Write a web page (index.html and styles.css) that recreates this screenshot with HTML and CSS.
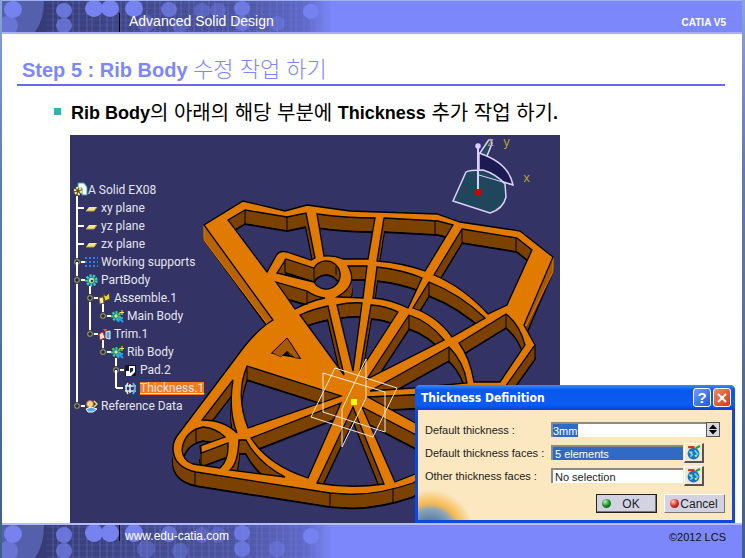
FILE: index.html
```
<!DOCTYPE html>
<html lang="ko">

<head>
    <meta charset="UTF-8">
    <meta name="viewport" content="width=device-width, initial-scale=1.0">
    <title>Advanced Solid Design - Step 5</title>
    <link rel="stylesheet" href="styles.css">
</head>

<body>
    <!-- Shared drawings -->
    <svg class="defs" width="0" height="0" aria-hidden="true">
        <defs>
            <linearGradient id="fade" x1="0" x2="1">
                <stop offset="0" stop-color="#32376d"/>
                <stop offset="0.7" stop-color="#4c549e"/>
                <stop offset="0.92" stop-color="#5f69c8"/>
                <stop offset="1" stop-color="#7b87fb"/>
            </linearGradient>
            <pattern id="threads" width="34" height="6" patternUnits="userSpaceOnUse">
                <path d="M3 0V6M9 0V6M17 0V6M22 0V6M30 0V6" stroke="#7b87e8" stroke-opacity="0.35"/>
                <path d="M0 2H34" stroke="#7b87e8" stroke-opacity="0.18"/>
            </pattern>
            <symbol id="dots" viewBox="0 0 330 33" preserveAspectRatio="none">
                <rect width="330" height="33" fill="url(#fade)"/>
                <path d="M0 0H42Q42 20 33 33H0Z" fill="#5560ad"/>
                <rect x="44" width="280" height="33" fill="url(#threads)"/>
                <g fill="#7682f0">
                    <circle cx="11" cy="9" r="9"/>
                    <circle cx="6" cy="26" r="10" opacity="0.6"/>
                    <circle cx="62" cy="10" r="8" opacity="0.8"/>
                    <circle cx="62" cy="26" r="8" opacity="0.7"/>
                    <circle cx="92" cy="8" r="9"/>
                    <circle cx="108" cy="8" r="9"/>
                    <circle cx="132" cy="8" r="9"/>
                    <circle cx="144" cy="24" r="9" opacity="0.4"/>
                    <circle cx="167" cy="9" r="8" opacity="0.7"/>
                    <circle cx="200" cy="10" r="8" opacity="0.4"/>
                    <circle cx="216" cy="10" r="8" opacity="0.4"/>
                    <circle cx="178" cy="26" r="8" opacity="0.4"/>
                    <circle cx="240" cy="8" r="8" opacity="0.8"/>
                    <circle cx="240" cy="24" r="8" opacity="0.7"/>
                    <circle cx="275" cy="24" r="8" opacity="0.4"/>
                    <circle cx="309" cy="11" r="8"/>
                </g>
            </symbol>
            <symbol id="knob" viewBox="0 0 12 12">
                <path d="M6 6H12" stroke="#fff" stroke-width="2"/>
                <circle cx="4" cy="6" r="3.5" fill="#8c8c8c" stroke="#333"/>
                <path d="M2 6H6M4 4V8" stroke="#111"/>
            </symbol>
            <symbol id="dash" viewBox="0 0 12 12">
                <path d="M4 6H11" stroke="#fff" stroke-width="2"/>
            </symbol>
            <symbol id="plane" viewBox="0 0 13 13">
                <path d="M4 5H12L9 9H1Z" fill="#f5e58a"/>
                <path d="M1 9H9L12 5" fill="none" stroke="#b8a03c"/>
            </symbol>
            <symbol id="grid" viewBox="0 0 13 13">
                <path d="M0 2H13M0 6H13M0 10H13" stroke="#2d7df0" stroke-width="2" stroke-dasharray="2 2"/>
            </symbol>
            <symbol id="gear" viewBox="0 0 13 13">
                <circle cx="6.5" cy="6.5" r="5" fill="#1b7fa0" stroke="#3fd0c0" stroke-width="2.5" stroke-dasharray="2 1.5"/>
                <circle cx="6.5" cy="6.5" r="2.7" fill="#d8e860"/>
                <circle cx="7" cy="7" r="1.3" fill="#154070"/>
            </symbol>
            <symbol id="body" viewBox="0 0 13 13">
                <circle cx="5" cy="6" r="3.7" fill="#1b7fa0" stroke="#40c890" stroke-width="2.5" stroke-dasharray="2 1.3"/>
                <circle cx="5" cy="6" r="1.7" fill="#d8e860"/>
                <path d="M7 7L12 12M7 12L9 8L12 8" stroke="#2d9df0" stroke-width="2"/>
                <path d="M11 0V5M8.500 2.500H13" stroke="#ffe860"/>
            </symbol>
            <symbol id="assemble" viewBox="0 0 13 13">
                <path d="M1 6L5 5L6 11L2 12Z" fill="#f6f0b0" stroke="#806a20"/>
                <path d="M5 2L8 4L11 1L12 7L7 9Z" fill="#e8cf40" stroke="#5a4b10"/>
            </symbol>
            <symbol id="trim" viewBox="0 0 13 13">
                <path d="M1 6L5 4L7 10L2 12Z" fill="#f6e0d0" stroke="#c03020"/>
                <path d="M5 1H9L8 5Z" fill="#e85040"/>
                <path d="M8 4L12 3V11L8 10Z" fill="#3fa0d8" stroke="#f0f0f0"/>
            </symbol>
            <symbol id="pad" viewBox="0 0 13 13">
                <path d="M1 1H12V12H1Z" fill="#15152c"/>
                <path d="M5 2H11V8L7 12H2V7H5Z" fill="#fff"/>
                <path d="M6 4H9V7L6 9Z" fill="#20204a"/>
            </symbol>
            <symbol id="thick" viewBox="0 0 13 13">
                <path d="M4 1Q0 6 4 12M6 2V11M1 4H12M1 9H12" fill="none" stroke="#d8f0f0" stroke-width="1.500"/>
                <path d="M9 1Q13 6 9 12" fill="none" stroke="#60b0c8" stroke-width="2"/>
            </symbol>
            <symbol id="refs" viewBox="0 0 13 13">
                <circle cx="5" cy="4" r="3.500" fill="#f4d890" stroke="#c06030"/>
                <path d="M1 9L6 7L12 9L8 12H3Z" fill="#50a8e0" stroke="#fff"/>
                <path d="M9 1L12 4L9 7" fill="none" stroke="#e8e060" stroke-width="1.500"/>
            </symbol>
            <symbol id="pick" viewBox="0 0 14 14">
                <circle cx="7" cy="8" r="5.500" fill="#1c70c8"/>
                <path d="M3 6L6 9L4 11M8 5L11 8L9 11" fill="none" stroke="#4fe0e0" stroke-width="1.500"/>
                <circle cx="5" cy="7" r="1" fill="#f0e040"/>
                <circle cx="9" cy="10" r="1" fill="#f0e040"/>
                <path d="M2 2H8" stroke="#d03020" stroke-width="2"/>
                <path d="M9 3L13 1" stroke="#20a040" stroke-width="2"/>
            </symbol>
        </defs>
    </svg>

    <div class="slide">
        <!-- Top banner -->
        <header class="banner banner-top">
            <svg class="banner-art" aria-hidden="true"><use href="#dots"/></svg>
            <span class="course">Advanced Solid Design</span>
            <strong class="product">CATIA V5</strong>
        </header>

        <main>
            <h1>Step 5 : Rib Body <span class="ko">수정 작업 하기</span></h1>
            <p class="lead"><b>Rib Body</b>의 아래의 해당 부분에 <b>Thickness</b> 추가 작업 하기<b>.</b></p>

            <!-- CAD window -->
            <section class="viewer">
                <svg class="model" viewBox="70 135 490 388" preserveAspectRatio="xMinYMin slice" role="img" aria-label="Rib body model">
                    <defs>
                        <path id="plate" fill-rule="evenodd" d="
                            M204 225L243 201L285 211L307 205L350 211L437 214L460 222L520 231L553 257L524 325L535 345L505 387Q470 450 413 483Q375 496 345 494L330 493L196 472Q173 467 173 448Q173 440 180 432L238 355Q256 330 273 320Z
                            M228 220L245 210L287 217L306 213L315 258L311 260L287 252Q279 250 276 256L267 272Z
                            M317 214Q345 218 375 218L368 259H343Q334 255 324 256Z
                            M384 218L438 221L453 225L425 271Q403 263 377 261Z
                            M462 229L517 238L532 250L507 305L488 314Q463 287 434 275Z
                            M277 273L286 259L314 268A14 14 0 1 1 314 282Z
                            M276 282L307 291Q315 297 325 298Q310 301 295 309Z
                            M348 266H367L363 298L337 297Q359 285 348 266Z
                            M377 267Q403 270 422 278L408 308Q390 299 373 298Z
                            M429 282Q460 294 485 318L452 337Q437 316 413 308Z
                            M300 315Q313 309 328 306L344 375Z
                            M337 305Q350 302 362 303L353 371Z
                            M371 305Q386 306 398 312L360 371Z
                            M409 315Q430 322 444 340L367 379Z
                            M459 343L506 314Q520 325 525 345L500 382H474Q470 358 459 343Z
                            M449 347Q464 362 467 383L413 388L370 391Z
                            M368 397L430 394V431Z
                            M362 407L420 437V472L395 482Z
                            M353 407L384 484Q350 489 317 483Z
                            M341 403L308 478Q268 465 251 438Z
                            M247 366L341 396L248 428Q235 395 247 366Z
                            M233 380L202 420Q224 420 237 433Q228 410 233 380Z
                            M182 450Q184 431 203 427Q216 428 225 437L200 446L201 453L228 443Q229 460 220 468L193 464Q183 461 182 450Z
                            M239 440H246Q258 463 285 477L230 470Q238 463 239 440Z
                            M287 338L272 353L300 358Z"/>
                    </defs>
                    <!-- Plate thickness, then the top face -->
                    <use href="#plate" y="14" fill="#7b4200" stroke="#000" stroke-width="2"/>
                    <g fill="#7b4200">
                        <use href="#plate" y="13"/>
                        <use href="#plate" y="12"/>
                        <use href="#plate" y="11"/>
                        <use href="#plate" y="10"/>
                        <use href="#plate" y="9"/>
                        <use href="#plate" y="8"/>
                        <use href="#plate" y="7"/>
                        <use href="#plate" y="6"/>
                        <use href="#plate" y="5"/>
                        <use href="#plate" y="4"/>
                        <use href="#plate" y="3"/>
                        <use href="#plate" y="2"/>
                        <use href="#plate" y="1"/>
                    </g>
                    <path d="M204 225V240L267 324L273 320Z" fill="#b86200" stroke="#e87c00"/>
                    <path d="M553 257V272L526 326L524 325Z" fill="#a85800" stroke="#e87c00"/>
                    <use href="#plate" fill="#e07b00" stroke="#000" stroke-width="1.3"/>
                    <!-- Wall corners -->
                    <path d="M245 210V224M287 217V231M435 221V235M462 229V243M516 238V252M506 314V328M535 345V359M429 282V296M409 315V329M449 347V361M285 259V273M314 268V281M336 267V275M307 291V305M247 366V380M195 472V486M330 493V507M393 489V503M196 428V442M201 446V465M287 338V350" stroke="#000" fill="none"/>
                    <path d="M270 353L271 369L307 378L309 362L287 337Z" fill="none" stroke="#f26a10"/>
                    <path d="M287 338L272 353L281 357L287 351L295 358L300 358Z" fill="#a85800" stroke="#000" stroke-width="0.5"/>
                    <!-- Reference planes -->
                    <path d="M323 373L385 392V432L323 412ZM335 368L397 388L373 437L311 417ZM366 359V398L342 447V409Z" fill="none" stroke="#f4e8dc"/>
                    <rect x="351" y="399" width="6" height="6" fill="#ff0"/>
                    <!-- Compass -->
                    <g stroke="#dcd0fa" stroke-width="1.500">
                        <path d="M480 171V153L488 141Q491 137 492 143Q490 150 480 171Z" fill="#244a60"/>
                        <path d="M479 153Q509 163 513 185L479 174Z" fill="#1b1a52"/>
                        <path d="M453 201L466 172Q469 170 483 170Q496 174 505 184L506 197Q503 209 490 213Z" fill="#20465c"/>
                        <path d="M478 147V190" stroke-width="2"/>
                        <circle cx="478" cy="146" r="2" fill="#dcd0fa"/>
                    </g>
                    <path d="M479 175L513 185" stroke="#dcd0fa"/>
                    <rect x="475" y="189" width="6" height="7" fill="#d40000"/>
                    <g class="axis">
                        <text x="487" y="146">z</text>
                        <text x="503" y="146">y</text>
                        <text x="523" y="182">x</text>
                    </g>
                </svg>

                <!-- Specification tree -->
                <div class="tree">
                    <div class="row root">
                        <svg width="15" height="16" viewBox="0 0 15 16"><path d="M5 1H11L14 5V13H9V6H5Z" fill="#fff" stroke="#30a0a0"/><circle cx="5" cy="9" r="3" fill="#5a4b10" stroke="#f5e58a" stroke-width="2.500" stroke-dasharray="2 1"/></svg>
                        A Solid EX08
                    </div>
                    <ul>
                        <li><div class="row"><svg><use href="#dash"/></svg><svg><use href="#plane"/></svg>xy plane</div></li>
                        <li><div class="row"><svg><use href="#dash"/></svg><svg><use href="#plane"/></svg>yz plane</div></li>
                        <li><div class="row"><svg><use href="#dash"/></svg><svg><use href="#plane"/></svg>zx plane</div></li>
                        <li><div class="row"><svg><use href="#knob"/></svg><svg><use href="#grid"/></svg>Working supports</div></li>
                        <li>
                            <div class="row"><svg><use href="#knob"/></svg><svg><use href="#gear"/></svg>PartBody</div>
                            <ul>
                                <li>
                                    <div class="row"><svg><use href="#knob"/></svg><svg><use href="#assemble"/></svg>Assemble.1</div>
                                    <ul>
                                        <li><div class="row"><svg><use href="#knob"/></svg><svg><use href="#body"/></svg>Main Body</div></li>
                                    </ul>
                                </li>
                                <li>
                                    <div class="row"><svg><use href="#knob"/></svg><svg><use href="#trim"/></svg>Trim.1</div>
                                    <ul>
                                        <li>
                                            <div class="row"><svg><use href="#knob"/></svg><svg><use href="#body"/></svg>Rib Body</div>
                                            <ul>
                                                <li><div class="row"><svg><use href="#knob"/></svg><svg><use href="#pad"/></svg>Pad.2</div></li>
                                                <li><div class="row"><svg><use href="#dash"/></svg><svg><use href="#thick"/></svg><span class="selected">Thickness.1</span></div></li>
                                            </ul>
                                        </li>
                                    </ul>
                                </li>
                            </ul>
                        </li>
                        <li><div class="row"><svg><use href="#knob"/></svg><svg><use href="#refs"/></svg>Reference Data</div></li>
                    </ul>
                </div>
            </section>

            <!-- Thickness dialog -->
            <form class="dialog">
                <div class="titlebar">
                    <h2>Thickness Definition</h2>
                    <button type="button" class="help" aria-label="Help">?</button>
                    <button type="button" class="close" aria-label="Close">
                        <svg width="12" height="12" viewBox="0 0 12 12"><path d="M2 2L10 10M10 2L2 10" stroke="#fff" stroke-width="2"/></svg>
                    </button>
                </div>
                <div class="field">
                    <label for="thickness">Default thickness :</label>
                    <input type="text" id="thickness" class="marked" value="3mm">
                    <button type="button" class="spin" aria-label="Step value">
                        <svg width="13" height="13" viewBox="0 0 13 13"><path d="M2 6L6.500 1L11 6ZM2 7L6.500 12L11 7Z"/></svg>
                    </button>
                </div>
                <div class="field">
                    <label for="faces">Default thickness faces :</label>
                    <input type="text" id="faces" class="active" value="5 elements">
                    <button type="button" class="pick" aria-label="Edit faces"><svg><use href="#pick"/></svg></button>
                </div>
                <div class="field">
                    <label for="others">Other thickness faces :</label>
                    <input type="text" id="others" value="No selection">
                    <button type="button" class="pick" aria-label="Edit other faces"><svg><use href="#pick"/></svg></button>
                </div>
                <div class="actions">
                    <button type="button" class="ok"><i class="lamp green"></i><span>OK</span></button>
                    <button type="button"><i class="lamp red"></i><span>Cancel</span></button>
                </div>
            </form>
        </main>

        <!-- Bottom banner -->
        <footer class="banner banner-bottom">
            <svg class="banner-art" aria-hidden="true"><use href="#dots"/></svg>
            <a class="site" href="#">www.edu-catia.com</a>
            <span class="copy">©2012 LCS</span>
        </footer>
    </div>
</body>

</html>
```
FILE: styles.css
```
* {
    box-sizing: border-box;
}

body {
    margin: 0;
    font-family: "Liberation Sans", "Noto Sans CJK KR", sans-serif;
    background: linear-gradient(#8aa4d8, #5b7fae 30%, #3f6088);
}

.defs {
    position: absolute;
}

/* Slide frame */
.slide {
    display: flex;
    flex-direction: column;
    min-height: 100vh;
    margin: 0 3px 0 2px;
    background: #fff;
}

/* Banners */
.banner {
    position: relative;
    display: flex;
    justify-content: space-between;
    background: #7b87fb;
    color: #fff;
    padding-right: 16px;
}

.banner-top {
    height: 34px;
    border-top: 1px solid #9fb0f0;
    border-bottom: 2px solid #a8b0fd;
}

.banner-bottom {
    height: 35px;
    border-top: 2px solid #b4bcff;
}

.banner-art {
    position: absolute;
    left: 0;
    top: 0;
    width: 330px;
    height: 100%;
}

.course,
.site {
    position: relative;
    margin-left: 117px;
    border-left: 1px solid #000;
    color: #fff;
    text-decoration: none;
}

.course {
    margin-top: 12px;
    padding-left: 9px;
    font-size: 14px;
    line-height: 16px;
}

.product {
    margin-top: 16px;
    font-size: 10px;
    line-height: 12px;
}

.site {
    height: 16px;
    padding-left: 5px;
    font-size: 12px;
    line-height: 22px;
}

.copy {
    font-size: 11px;
    line-height: 24px;
    color: #111;
}

/* Slide content */
main {
    position: relative;
    display: flex;
    flex-direction: column;
    flex: 1;
}

h1 {
    margin: 22px 17px 0 15px;
    padding: 0 5px;
    border-bottom: 2px solid #6b67f5;
    font-size: 20px;
    line-height: 28px;
    color: #7b87fb;
}

.ko {
    font-size: 22px;
    font-weight: 300;
}

.lead {
    display: flex;
    align-items: center;
    margin: 14px 0 9px 52px;
    font-size: 20px;
    line-height: 26px;
    white-space: pre;
}

.lead b {
    font-size: 18px;
}

.lead::before {
    content: "";
    width: 7px;
    height: 7px;
    margin: 0 10px 4px 0;
    background: #2cb5ad;
}

/* CAD window */
.viewer {
    position: relative;
    flex: 1;
    width: 66%;
    min-width: 490px;
    min-height: 388px;
    margin-left: 68px;
    background: #333366;
}

.model {
    position: absolute;
    width: 100%;
    height: 100%;
}

.axis {
    font: 12px "Liberation Mono", monospace;
    fill: #b8ac20;
}

/* Specification tree */
.tree {
    position: relative;
    padding: 46px 0 0 3px;
    font-family: Roboto, sans-serif;
    font-size: 12px;
    color: #e4e4ee;
}

.tree ul {
    margin: 0;
    padding: 0;
    list-style: none;
}

.tree ul ul {
    padding-left: 13px;
}

.tree li {
    position: relative;
}

.tree li::before {
    content: "";
    position: absolute;
    left: 3px;
    top: -9px;
    bottom: 0;
    width: 2px;
    background: #fff;
}

.tree li:last-child::before {
    bottom: auto;
    height: 18px;
}

.tree li:first-child::before {
    top: -3px;
}

.tree li:first-child:last-child::before {
    height: 12px;
}

.row {
    position: relative;
    display: flex;
    align-items: center;
    height: 18px;
}

.row svg {
    width: 13px;
    height: 13px;
    margin-right: 3px;
}

.row svg:first-child {
    width: 12px;
    height: 12px;
    margin-right: 0;
}

.root svg:first-child {
    width: 15px;
    height: 16px;
}

.selected {
    background: #f47a1c;
    line-height: 13px;
    text-decoration: underline;
}

/* Thickness dialog */
.dialog {
    position: absolute;
    right: 7px;
    bottom: 0;
    width: 320px;
    border: solid #0c49dc;
    border-width: 0 3px 3px;
    border-radius: 5px 5px 0 0;
    background: radial-gradient(circle at 12px 110%, #34506c 0, #86a4bc 24px, #f6b850 30px, rgba(251, 232, 192, 0) 44px) #fbe8c0;
    font-size: 11px;
    color: #222;
}

.titlebar {
    display: flex;
    align-items: center;
    gap: 2px;
    height: 25px;
    margin: 0 -3px 8px;
    padding: 0 4px 0 6px;
    border-radius: 5px 5px 0 0;
    background: linear-gradient(#3c8cf8, #0a58ea 20%, #0a5cf4 80%, #0644c8);
}

.titlebar h2 {
    flex: 1;
    margin: 0;
    font: bold 12px "DejaVu Sans Condensed", "DejaVu Sans", sans-serif;
    color: #fff;
}

.titlebar button {
    display: flex;
    align-items: center;
    justify-content: center;
    width: 18px;
    height: 19px;
    padding: 0;
    border: 1px solid #fff;
    border-radius: 3px;
    background: linear-gradient(135deg, #6c9cf8, #2456d0);
    font: bold 15px "Liberation Sans", sans-serif;
    color: #fff;
}

.titlebar .close {
    background: linear-gradient(135deg, #f08860, #d03c10);
}

.field {
    display: flex;
    align-items: center;
    height: 23px;
    padding: 0 28px 0 7px;
}

.field:nth-of-type(2) {
    padding-right: 12px;
}

.field label {
    width: 126px;
}

.field input {
    flex: 1;
    min-width: 0;
    height: 15px;
    padding: 0 2px;
    border: solid #8a8a8a;
    border-width: 2px 0 0 2px;
    background: #fff;
    font: 11px "Liberation Sans", sans-serif;
    color: #222;
}

.field .marked {
    padding: 0;
    background: linear-gradient(#316ac5, #316ac5) 0 0 / 25px 13px no-repeat #fff;
    color: #fff;
}

.field .active {
    background: #316ac5;
    color: #fff;
}

.field button {
    display: flex;
    align-items: center;
    justify-content: center;
    flex: none;
    padding: 0;
    border: 1px outset #eee;
    background: #d8d8e0;
}

.field .spin {
    width: 14px;
    height: 15px;
    border: 1px solid #555;
}

.field .pick {
    width: 20px;
    height: 20px;
    margin-left: 1px;
    border: solid;
    border-width: 1px 2px 2px 1px;
    border-color: #fff #555 #555 #fff;
    background: #f0e8d0;
}

.pick svg {
    width: 15px;
    height: 15px;
}

.actions {
    display: flex;
    justify-content: flex-end;
    gap: 7px;
    padding: 7px 7px 7px 0;
}

.actions button {
    display: flex;
    align-items: center;
    width: 61px;
    height: 19px;
    padding: 0 5px;
    border: 1px solid;
    border-color: #fff #777 #777 #fff;
    background: #d2d2e2;
    font: 12px "Liberation Sans", sans-serif;
    color: #222;
}

.actions .ok {
    border-color: #222;
    box-shadow: inset -1px -1px #777;
}

.actions span {
    flex: 1;
    text-align: center;
}

.lamp {
    width: 9px;
    height: 9px;
    border-radius: 50%;
}

.green {
    background: radial-gradient(circle at 35% 30%, #c0f0c0, #189018 50%, #0a500a);
}

.red {
    background: radial-gradient(circle at 35% 30%, #ffd0c8, #d83020 50%, #801008);
}
```
